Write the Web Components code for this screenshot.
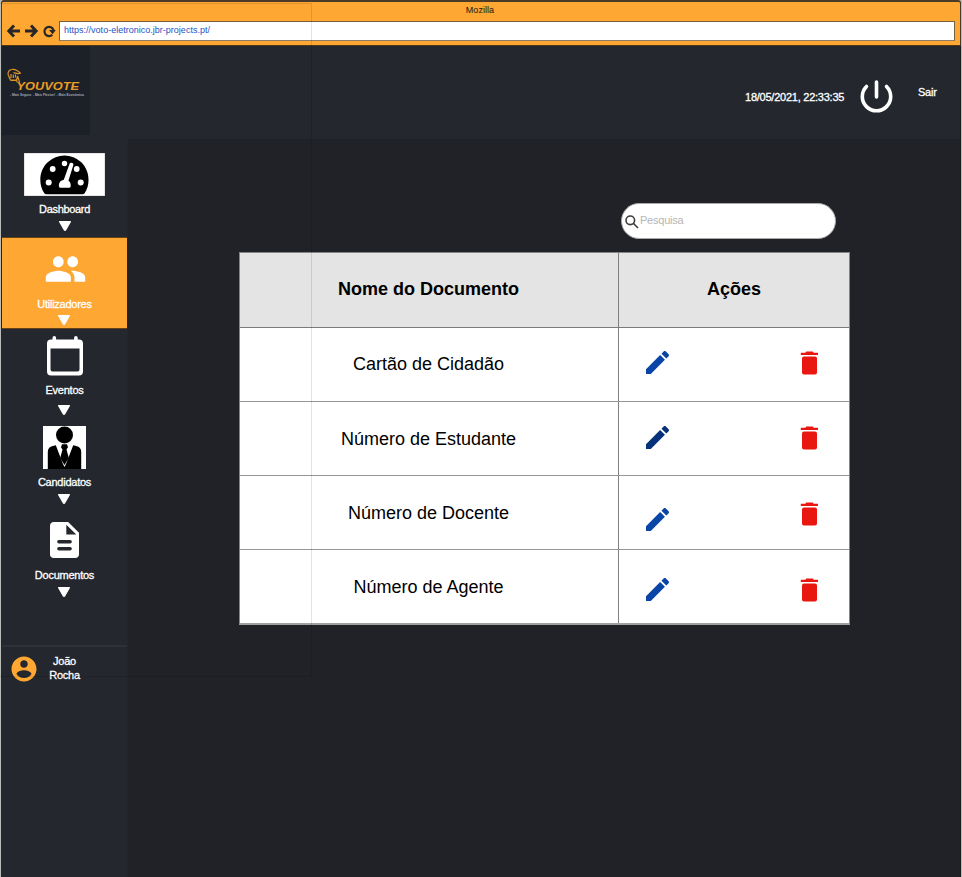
<!DOCTYPE html>
<html lang="pt">
<head>
<meta charset="utf-8">
<title>Mozilla</title>
<style>
html,body{margin:0;height:100%;overflow:hidden;background:#b9bdba}
body{font-family:"Liberation Sans",Arial,sans-serif}
</style>
</head>
<body>
<vote-app></vote-app>
<script>
const define=(name,html,fill)=>customElements.define(name,class extends HTMLElement{
  connectedCallback(){
    if(this.shadowRoot)return;
    const root=this.attachShadow({mode:'open'});
    root.innerHTML=html;
    if(fill)fill(root,this);
  }
});

const ICONS={
  dashboard:`<svg width="81" height="43" viewBox="0 0 81 43"><path fill="#fff" stroke="#999" stroke-width=".5" d="M0 0h81v43H0z"/><path d="M20.500 40.500C14 31 15 17 24 9a24.300 24.300 0 0 1 33 0c8.500 8 10 22 3.500 31.500q-1 .7-2 .7H22.500q-1.500 0-2-.7z"/><g fill="#fff"><circle cx="40.500" cy="10.500" r="2.700"/><circle cx="28.700" cy="16" r="2.900"/><circle cx="52.700" cy="16" r="2.900"/><circle cx="24.700" cy="29.500" r="3"/><circle cx="56.700" cy="29.500" r="3"/><path d="M47.300 9.800q2.500.3 2 2.500L44.500 27.500q2.200 1.500 2.300 4.700 0 2.500-1.500 2.500h-9q-1.500 0-1.500-2.500.4-4.700 5-5.500L45.500 11q.5-1.300 1.800-1.200z"/></g></svg>`,
  people:`<svg width="43" height="44" viewBox="0 0 24 24" preserveAspectRatio="none"><path fill="#fff" d="M16 11c1.660 0 2.990-1.340 2.990-3S17.660 5 16 5s-3 1.340-3 3 1.340 3 3 3zm-8 0c1.660 0 2.990-1.340 2.990-3S9.660 5 8 5 5 6.340 5 8s1.340 3 3 3zm0 2c-2.330 0-7 1.170-7 3.500V19h14v-2.500C15 14.170 10.330 13 8 13zm8 0c-.29 0-.62.02-.97.05 1.160.84 1.970 1.970 1.970 3.450V19h6v-2.500c0-2.330-4.670-3.500-7-3.500z"/></svg>`,
  calendar:`<svg width="36" height="40" viewBox="0 0 36 40"><path fill="#fff" fill-rule="evenodd" d="M5.500 3.500V1.800a1.700 1.700 0 0 1 3.600 0v1.700h18V1.800a1.700 1.700 0 0 1 3.600 0v1.700H32a4 4 0 0 1 4 4v28a4 4 0 0 1-4 4H4a4 4 0 0 1-4-4v-28a4 4 0 0 1 4-4zM3.500 12.500v21q0 2 2 2h25q2 0 2-2v-21z"/></svg>`,
  candidate:`<svg width="43" height="43" viewBox="0 0 43 43"><path fill="#fff" d="M0 0h43v43H0z"/><circle cx="21.500" cy="9" r="8.500"/><path d="M4.800 43V26q0-5 5-6l3-.8L20 38l1.500 3 1.500-3 7.200-18.800 3 .8q5 1 5 6v17z"/><path d="M19 18.200h5l1 3-1.500 2.300 2.300 8.500-4.300 7-4.300-7 2.300-8.500L18 21.200z"/></svg>`,
  document:`<svg width="29" height="36" viewBox="4 2 16 20" preserveAspectRatio="none"><path fill="#fff" d="M14 2H6c-1.100 0-1.990.9-1.990 2L4 20c0 1.100.89 2 1.990 2H18c1.100 0 2-.9 2-2V8l-6-6zM13 9V3.500L18.500 9H13z"/><path stroke="#24272e" stroke-width="1.900" stroke-linecap="round" d="M8.900 13h6.200M8.900 16.900h6.200"/></svg>`
};

/* Browser chrome: title, navigation arrows, address field */
define('browser-bar',`<style>
:host{display:grid;grid-template-rows:18px 22px;height:43px;background:#ffa733;border-top:2px solid #4b3a28;border-bottom:1px solid #4e3517;border-radius:3px 3px 0 0;box-sizing:content-box}
.title{font-size:9px;line-height:16px;text-align:center;color:#1b1610;letter-spacing:.05px;padding-right:2px}
.row{display:flex;align-items:center;padding:0 5px 0 5px}
.nav{display:block;flex:none;width:52px}
.url{flex:1;height:18px;border:1px solid #75603f;border-bottom-color:#8c7e6b;background:#fff;font-size:9px;line-height:17px;padding-left:4px;color:#1f52c4;letter-spacing:.01px}
</style>
<div class="title"><slot name="title"></slot></div>
<div class="row"><svg class="nav" width="52" height="20" viewBox="0 0 52 20" fill="none" stroke="#262626" stroke-width="2.900"><path d="M13 10H2M7 4.500 1.800 10 7 15.500M18 10h11M24 4.500 29.200 10 24 15.500"/><path d="M45.300 13.700a4.600 4.600 0 1 1 1.200-4.400" stroke-width="2.200"/><path d="M42 9h6.800l-3.200 4.200z" fill="#262626" stroke="none"/></svg><div class="url"><slot></slot></div></div>`);

define('brand-logo',`<style>:host{display:block;width:88px;height:89px;background:#1c2028}svg{display:block}</style>
<svg width="88" height="89" viewBox="0 0 88 89" font-family="Liberation Sans,Arial,sans-serif"><g fill="none" stroke="#dd9425" stroke-width="1.200" stroke-linejoin="round"><path d="M7.500 31.500C5 28.500 5.500 24 10 23.500c3-.5 4.500 1 6.500 2l2 1.700-2.500.5-4.500-1M7 31l1.500 3h6l1-3.500M9 28v4M11.300 28.500v3.500M13.500 28.500v3M15.500 30l2 6"/><path d="M8.500 34.500h6l1 2"/></g>
<text x="14.500" y="43.700" font-size="10.800" font-weight="700" font-style="italic" fill="#e99d25" textLength="62.500" lengthAdjust="spacingAndGlyphs">YOUVOTE</text>
<text x="8" y="49.500" font-size="3.500" font-weight="700" fill="#a9abb0" textLength="74" lengthAdjust="spacingAndGlyphs" xml:space="preserve">- Mais Seguro  - Mais Flexível  - Mais Económico</text></svg>`);

define('app-header',`<style>
:host{display:flex;height:93px;background:#24272e;color:#fff;font-size:11px;-webkit-text-stroke:.3px #fff}
.grow{flex:1}
time{margin-top:44px;line-height:14px;width:99px;letter-spacing:-.24px;padding-left:1px;margin-left:-1px;white-space:nowrap}
svg{margin:34px 25px 0 16px;width:33px;height:33px;flex:none}
.out{margin-top:39px;line-height:14px;width:42px;letter-spacing:-.25px}
</style>
<brand-logo></brand-logo><div class="grow"></div>
<time>18/05/2021, 22:33:35</time>
<svg viewBox="0 0 33 33" fill="none" stroke="#fff" stroke-width="3.600" stroke-linecap="round"><path d="M16.500 2v15M6.500 6.500a14.200 14.200 0 1 0 20 0"/></svg>
<div class="out">Sair</div>`);

define('nav-item',`<style>
:host{display:flex;flex-direction:column;align-items:center;box-sizing:border-box;height:92px;color:#fff;font-size:11px}
:host([active]){background:#ffa733;border:1px solid #654218;border-left:0;border-right:0}
.i{display:flex;margin-top:var(--top);margin-left:var(--ix,0px)}
.l{margin-top:var(--gap,7px);line-height:14px;letter-spacing:var(--ls,-.25px);-webkit-text-stroke:.3px #fff}
.t{display:block;margin-top:var(--tri,5px);margin-left:var(--dx,0px)}
</style><div class="i"></div><div class="l"><slot></slot></div><svg class="t" width="12" height="10" viewBox="0 0 12 10"><path d="M.6.600h10.800L6.800 8.800q-.8 1-1.600 0z" fill="#fff" stroke="#fff" stroke-width="1.200" stroke-linejoin="round"/></svg>`,
(r,h)=>{r.querySelector('.i').innerHTML=ICONS[h.getAttribute('icon')]});

define('user-card',`<style>
:host{display:flex;border-top:2px solid #303136;height:60px;color:#fff;font-size:11px;line-height:14px;letter-spacing:-.25px;-webkit-text-stroke:.3px #fff}
svg{width:30px;height:30px;margin:7px 0 0 7px}
div{margin:7px 0 0 5.500px;width:40px;text-align:center}
</style><svg viewBox="0 0 24 24" fill="#ffa733"><path d="M12 2C6.480 2 2 6.480 2 12s4.480 10 10 10 10-4.480 10-10S17.520 2 12 2zm0 3c1.660 0 3 1.340 3 3s-1.340 3-3 3-3-1.340-3-3 1.340-3 3-3zm0 14.200c-2.500 0-4.710-1.280-6-3.220.03-1.990 4-3.080 6-3.080 1.990 0 5.970 1.090 6 3.080-1.290 1.940-3.500 3.220-6 3.220z"/></svg><div><slot></slot></div>`);

define('side-nav',`<style>:host{display:flex;flex-direction:column;background:#24272e;border-right:1px solid #23252b;box-sizing:border-box}
user-card{margin-top:40px}</style>
<nav-item icon="dashboard" style="height:98px;--top:14px;--gap:6px;--dx:1px;--ls:-.32px">Dashboard</nav-item>
<nav-item icon="people" active style="--top:9px;--gap:6px;--tri:4px;--dx:-2px;--ix:1px">Utilizadores</nav-item>
<nav-item icon="calendar" style="--top:7px;--tri:8px;--dx:-2px">Eventos</nav-item>
<nav-item icon="candidate" style="--top:5px;--gap:6px;--dx:-2px;--ix:-1px">Candidatos</nav-item>
<nav-item icon="document" style="--top:9px;--gap:10px;--dx:-1px">Documentos</nav-item>
<user-card>João<br>Rocha</user-card>`);

define('search-box',`<style>
:host{display:flex;box-sizing:border-box;width:215px;height:36px;border:1px solid #aaa;border-radius:18px;background:#fff;color:#b5b5b5;font-size:11px;letter-spacing:-.22px}
svg{width:14px;height:14px;margin:11px 1px 0 3px}
span{margin-top:9px;line-height:14px}
</style><svg viewBox="0 0 14 14" fill="none" stroke="#3d3d3d" stroke-width="1.600"><circle cx="5.300" cy="5.300" r="4.300"/><path d="m8.300 8.300 4.700 4.700"/></svg><span><slot></slot></span>`);

define('doc-row',`<style>
:host{display:grid;grid-template-columns:379px 1fr;box-sizing:border-box;border-bottom:1px solid #969696;background:#fff;color:#000;font-size:18px}
.n{display:flex;align-items:center;justify-content:center;border-right:1px solid #808080;padding-top:var(--y,0px);padding-right:1px}
.a{display:flex;justify-content:space-between;padding:0 31px 0 27px}
.p{width:23px;height:23px;margin-top:var(--p,23px);fill:var(--c,#0845a6)}
.d{width:18px;height:24px;margin-top:var(--d,23px)}
:host([head]){background:#e4e4e4;font-weight:700;border-color:#7b7b7b}
:host([head]) .n{padding:0 1px 2px 0}
:host([head]) .a{align-items:center;justify-content:center;padding:0 0 2px}
:host([last]){border-bottom:0}
</style><div class="n"><slot></slot></div><div class="a"></div>`,
(r,h)=>{r.querySelector('.a').innerHTML=h.hasAttribute('head')?'<slot name="actions"></slot>':
`<svg class="p" viewBox="3 3 18 18"><path d="M3 17.250V21h3.750L17.810 9.940l-3.750-3.750L3 17.250zM20.710 7.040c.39-.39.39-1.020 0-1.410l-2.340-2.340c-.39-.39-1.020-.39-1.410 0l-1.830 1.830 3.750 3.750 1.830-1.830z"/></svg>
<svg class="d" viewBox="0 0 18 24" fill="#e81710"><path d="M.8 1.700h4.500L6.300.6h6.400l1 1.100h4.500V4H.8zM2 7.500q0-2 2-2h11q2 0 2 2v14q0 2-2 2H4q-2 0-2-2z"/></svg>`});

define('doc-table',`<style>:host{display:grid;grid-template-rows:75px 74px 74px 74px 1fr;box-sizing:border-box;width:611px;height:373px;border:1px solid #858585;border-bottom:2px solid #a0a0a0}</style>
<doc-row head>Nome do Documento<span slot="actions">Ações</span></doc-row>
<doc-row>Cartão de Cidadão</doc-row>
<doc-row style="--c:#06327c;--p:24px;--d:24px;--y:2px">Número de Estudante</doc-row>
<doc-row style="--p:32px;--d:26px;--y:2px">Número de Docente</doc-row>
<doc-row last style="--p:28px;--d:28px;--y:2px">Número de Agente</doc-row>`);

define('vote-app',`<style>
:host{display:grid;grid-template-rows:46px 93px 1fr;box-sizing:border-box;width:961px;height:877px;margin:0;padding-left:1px;position:relative}
browser-bar{border-left:1px solid #4b3a28;border-right:1px solid #4b3a28}
app-header,.body{border-left:1px solid #22252b;border-right:1px solid #1b1c20}
.body{display:grid;grid-template-columns:126px 1fr;background:#212227}
main{display:flex;flex-direction:column;padding:64px 0 0 111px}
search-box{margin:0 0 13px 382px}
.guide{position:absolute;left:0;top:3px;width:312px;height:674px;box-sizing:border-box;border:1px solid rgba(0,0,0,.11);border-left:0;pointer-events:none}
</style>
<browser-bar><span slot="title">Mozilla</span>https://voto-eletronico.jbr-projects.pt/</browser-bar>
<app-header></app-header>
<div class="body"><side-nav></side-nav><main><search-box>Pesquisa</search-box><doc-table></doc-table></main></div>
<div class="guide"></div>`);
</script>
</body>
</html>
